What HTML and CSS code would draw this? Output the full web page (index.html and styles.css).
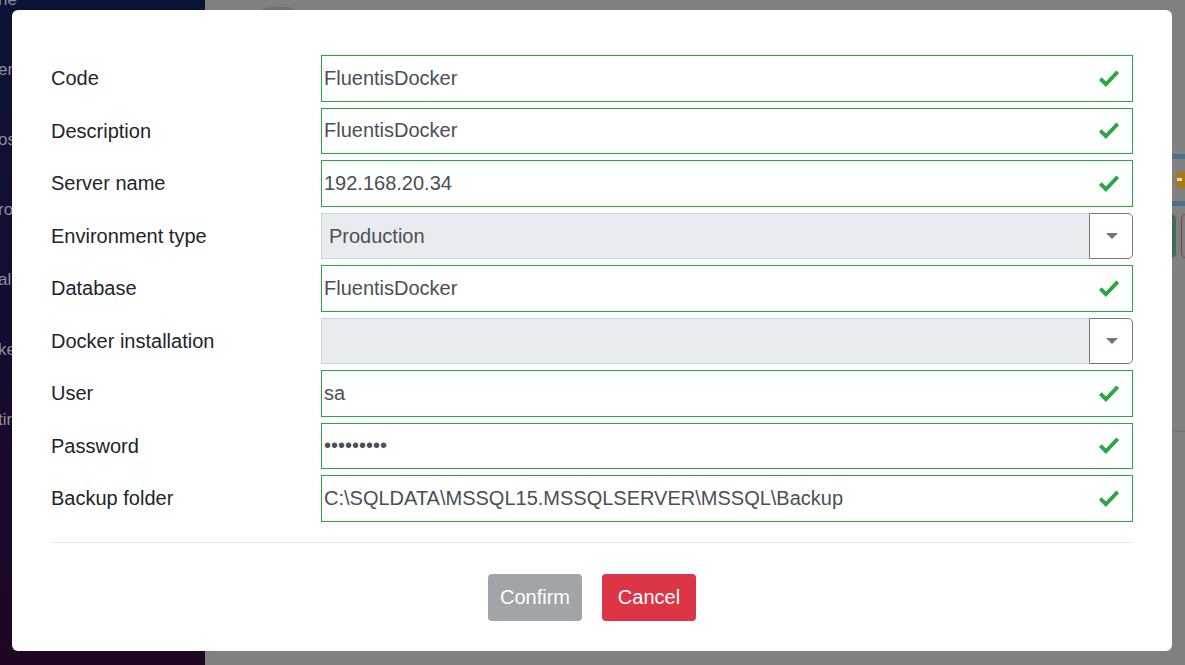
FILE: index.html
```html
<!DOCTYPE html>
<html>
<head>
<meta charset="utf-8">
<link rel="stylesheet" href="styles.css">
</head>
<body>
<div class="app">
  <nav class="sidebar">
    <div class="nav-item nav-first">ne</div>
    <div class="nav-item">en</div>
    <div class="nav-item">os</div>
    <div class="nav-item">ro</div>
    <div class="nav-item">al</div>
    <div class="nav-item">ke</div>
    <div class="nav-item">tin</div>
  </nav>
  <main class="main">
    <div class="top-shade"></div>
    <div class="bar bar-first"></div>
    <div class="row-badge"><span class="badge"></span></div>
    <div class="bar"></div>
    <div class="row-btns"><span class="ghost-green"></span><span class="ghost-red"></span></div>
    <div class="hline"></div>
  </main>
</div>

<div class="modal">
  <form class="form">
    <label class="label">Code</label>
    <div class="field"><input class="input" value="FluentisDocker"><svg class="check" viewBox="0 0 20 17"><path d="M1.3 8.6 L6.9 14.2 L18.7 1.8"/></svg></div>

    <label class="label">Description</label>
    <div class="field"><input class="input" value="FluentisDocker"><svg class="check" viewBox="0 0 20 17"><path d="M1.3 8.6 L6.9 14.2 L18.7 1.8"/></svg></div>

    <label class="label">Server name</label>
    <div class="field"><input class="input" value="192.168.20.34"><svg class="check" viewBox="0 0 20 17"><path d="M1.3 8.6 L6.9 14.2 L18.7 1.8"/></svg></div>

    <label class="label">Environment type</label>
    <div class="select"><span class="select-value">Production</span><span class="select-btn"><span class="caret"></span></span></div>

    <label class="label">Database</label>
    <div class="field"><input class="input" value="FluentisDocker"><svg class="check" viewBox="0 0 20 17"><path d="M1.3 8.6 L6.9 14.2 L18.7 1.8"/></svg></div>

    <label class="label">Docker installation</label>
    <div class="select"><span class="select-value"></span><span class="select-btn"><span class="caret"></span></span></div>

    <label class="label">User</label>
    <div class="field"><input class="input" value="sa"><svg class="check" viewBox="0 0 20 17"><path d="M1.3 8.6 L6.9 14.2 L18.7 1.8"/></svg></div>

    <label class="label">Password</label>
    <div class="field"><input class="input" type="password" value="123456789"><svg class="check" viewBox="0 0 20 17"><path d="M1.3 8.6 L6.9 14.2 L18.7 1.8"/></svg></div>

    <label class="label">Backup folder</label>
    <div class="field"><input class="input" value="C:\SQLDATA\MSSQL15.MSSQLSERVER\MSSQL\Backup"><svg class="check" viewBox="0 0 20 17"><path d="M1.3 8.6 L6.9 14.2 L18.7 1.8"/></svg></div>
  </form>
  <div class="divider"></div>
  <div class="actions">
    <button class="btn btn-confirm" type="button" disabled>Confirm</button>
    <button class="btn btn-cancel" type="button">Cancel</button>
  </div>
</div>
</body>
</html>
```

FILE: styles.css
```css
* { box-sizing: border-box; }
html, body {
  margin: 0;
  padding: 0;
  width: 1185px;
  height: 665px;
  overflow: hidden;
  font-family: "Liberation Sans", Arial, sans-serif;
}
.app {
  display: flex;
  width: 1185px;
  height: 665px;
}
.sidebar {
  width: 205px;
  flex: none;
  background: linear-gradient(180deg, #0a1436 0%, #150c30 50%, #1f0624 100%);
  overflow: hidden;
}
.nav-item {
  height: 70px;
  line-height: 70px;
  font-size: 17px;
  color: #8d909b;
  margin-left: -2px;
}
.nav-first {
  margin-top: -35px;
}
.main {
  flex: 1;
  background: #808080;
  display: flex;
  flex-direction: column;
  overflow: hidden;
}
.top-shade {
  width: 30px;
  height: 3px;
  margin: 7px 0 0 58px;
  border-radius: 50% 50% 0 0;
  background: #707070;
  flex: none;
}
.bar {
  height: 5px;
  background: #4e6f8c;
  flex: none;
}
.bar-first { margin-top: 144px; }
.row-badge {
  height: 42px;
  flex: none;
  display: flex;
  justify-content: flex-end;
  align-items: center;
}
.badge {
  width: 13px;
  height: 16px;
  background: #a77a16;
  border-radius: 2px;
  margin-right: -4px;
  position: relative;
}
.badge::after {
  content: "";
  position: absolute;
  left: 1px;
  top: 6px;
  width: 5px;
  height: 3px;
  background: #d8d8d8;
}
.row-btns {
  height: 44px;
  flex: none;
  margin-top: 8px;
  display: flex;
  justify-content: flex-end;
  gap: 5px;
}
.ghost-green {
  width: 20px;
  height: 44px;
  border-radius: 0 5px 5px 0;
  background: #3f6e4c;
}
.ghost-red {
  width: 20px;
  height: 44px;
  border: 1px solid #8d3d47;
  border-radius: 5px 0 0 5px;
  margin-right: -16px;
}
.hline {
  height: 1px;
  flex: none;
  background: #737373;
  margin-top: 173px;
}

.modal {
  position: absolute;
  left: 12px;
  top: 10px;
  width: 1160px;
  height: 641px;
  background: #fff;
  border-radius: 6px;
  padding: 45px 39px 0 39px;
}
.form {
  display: grid;
  grid-template-columns: 270px 812px;
  grid-auto-rows: 46.5px;
  row-gap: 6px;
  margin: 0;
}
.label {
  display: flex;
  align-items: center;
  font-size: 20px;
  color: #212529;
  padding-top: 1px;
}
.field {
  display: flex;
  align-items: center;
  border: 1px solid #28a745;
  background: #fff;
}
.input {
  flex: 1;
  min-width: 0;
  border: none;
  outline: none;
  background: transparent;
  padding: 0 0 0 2px;
  font-family: "Liberation Sans", Arial, sans-serif;
  font-size: 20px;
  color: #495057;
  height: 100%;
}
.check {
  width: 20px;
  height: 17px;
  margin-right: 13px;
  flex: none;
}
.check path {
  fill: none;
  stroke: #28a745;
  stroke-width: 3.8;
  stroke-linejoin: miter;
}
.select {
  display: flex;
}
.select-value {
  flex: 1;
  background: #e9ecef;
  border: 1px solid #ced4da;
  border-right: none;
  display: flex;
  align-items: center;
  padding-left: 7px;
  padding-top: 1px;
  font-size: 20px;
  color: #495057;
}
.select-btn {
  width: 44px;
  flex: none;
  background: #fff;
  border: 1px solid #737980;
  border-radius: 0 5px 5px 0;
  display: flex;
  align-items: center;
  justify-content: center;
}
.caret {
  width: 0;
  height: 0;
  border-left: 6px solid transparent;
  border-right: 6px solid transparent;
  border-top: 6px solid #6c757d;
  margin-left: 2px;
}
.divider {
  height: 1px;
  background: #e5e5e5;
  margin-top: 20px;
}
.actions {
  display: flex;
  justify-content: center;
  gap: 20px;
  margin-top: 31px;
}
.btn {
  width: 94px;
  height: 47px;
  border: none;
  border-radius: 4px;
  font-family: "Liberation Sans", Arial, sans-serif;
  font-size: 20px;
  color: #fff;
  padding: 0;
}
.btn-confirm {
  background: #a0a5aa;
  color: #fff;
}
.btn-cancel {
  background: #dc3545;
}
```
